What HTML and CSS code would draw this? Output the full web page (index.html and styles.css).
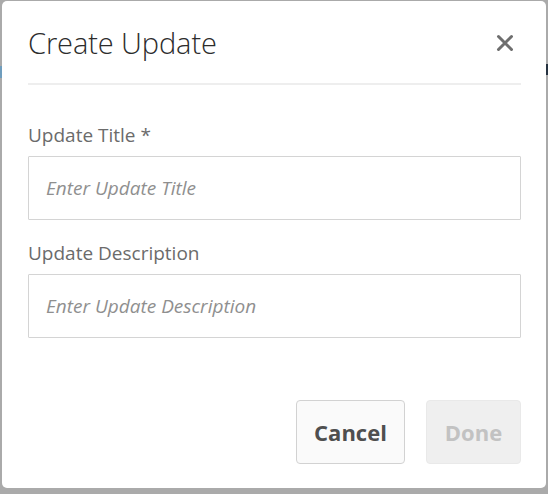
FILE: index.html
```html
<!DOCTYPE html>
<html lang="en">
<head>
<meta charset="utf-8">
<title>Create Update</title>
<link rel="stylesheet" href="styles.css">
</head>
<body>
<div class="backdrop">
  <span class="peek peek-left"></span>
  <span class="peek peek-right"></span>
  <div class="dialog" role="dialog" aria-labelledby="dlg-title">
    <header class="dialog-header">
      <h1 id="dlg-title" class="dialog-title">Create Update</h1>
      <button class="close-btn" aria-label="Close">
        <svg width="18" height="18" viewBox="0 0 18 18" aria-hidden="true">
          <path d="M2.5 2.5 L15.5 15.5 M15.5 2.5 L2.5 15.5" stroke="#6e6e6e" stroke-width="3" stroke-linecap="round" fill="none"/>
        </svg>
      </button>
    </header>
    <div class="dialog-body">
      <label class="field">
        <span class="field-label">Update Title *</span>
        <input class="field-input" type="text" placeholder="Enter Update Title">
      </label>
      <label class="field">
        <span class="field-label">Update Description</span>
        <input class="field-input" type="text" placeholder="Enter Update Description">
      </label>
    </div>
    <footer class="dialog-footer">
      <button class="btn btn-secondary">Cancel</button>
      <button class="btn btn-disabled" disabled>Done</button>
    </footer>
  </div>
</div>
</body>
</html>
```

FILE: styles.css
```css
* { box-sizing: border-box; }

html, body {
  margin: 0;
  padding: 0;
}

body {
  background: #aaaaaa;
  font-family: "Open Sans", "Noto Sans", sans-serif;
  width: 548px;
  height: 494px;
  overflow: hidden;
}

.backdrop {
  position: relative;
  width: 548px;
  height: 494px;
  padding: 1px 2px 6px 2px;
}

.peek {
  position: absolute;
  width: 2px;
}
.peek-left {
  left: 0;
  top: 66px;
  height: 12px;
  background: #6f9dbd;
}
.peek-right {
  right: 0;
  top: 64px;
  height: 11px;
  background: #253240;
}

.dialog {
  position: relative;
  width: 544px;
  height: 487px;
  background: #ffffff;
  border-radius: 5px;
  padding: 24px 25px 24px 26px;
  display: flex;
  flex-direction: column;
}

.dialog-header {
  display: flex;
  align-items: center;
  justify-content: space-between;
  padding-bottom: 22px;
  border-bottom: 2px solid #eeeeee;
}

.dialog-title {
  margin: 0;
  font-size: 29px;
  font-weight: 300;
  line-height: 36px;
  color: #2c2c2c;
  letter-spacing: -0.1px;
}

.close-btn {
  border: 0;
  background: transparent;
  padding: 0;
  margin-right: 7px;
  width: 18px;
  height: 18px;
  display: flex;
  cursor: pointer;
}

.dialog-body {
  display: flex;
  flex-direction: column;
  gap: 21px;
  padding-top: 38px;
}

.field {
  display: flex;
  flex-direction: column;
  gap: 9px;
}

.field-label {
  font-size: 19px;
  line-height: 24px;
  color: #6b6b6b;
}

.field-input {
  height: 64px;
  width: 100%;
  border: 1px solid #d4d4d4;
  border-radius: 1px;
  padding: 0 17px;
  font-family: "Open Sans", "Noto Sans", sans-serif;
  font-size: 19px;
  font-style: italic;
  color: #333;
  background: #fff;
  outline: none;
}

.field-input::placeholder {
  color: #8f8f8f;
  font-style: italic;
}

.dialog-footer {
  margin-top: auto;
  display: flex;
  justify-content: flex-end;
  gap: 21px;
}

.btn {
  height: 64px;
  border-radius: 4px;
  font-family: "Open Sans", "Noto Sans", sans-serif;
  font-size: 22px;
  font-weight: 700;
  padding: 0 16px;
  cursor: pointer;
}

.btn-secondary {
  width: 109px;
  background: #fafafa;
  border: 1px solid #d2d2d2;
  color: #4f4f4f;
}

.btn-disabled {
  width: 95px;
  background: #efefef;
  border: 1px solid #e9e9e9;
  color: #c2c2c2;
  cursor: default;
}
```
